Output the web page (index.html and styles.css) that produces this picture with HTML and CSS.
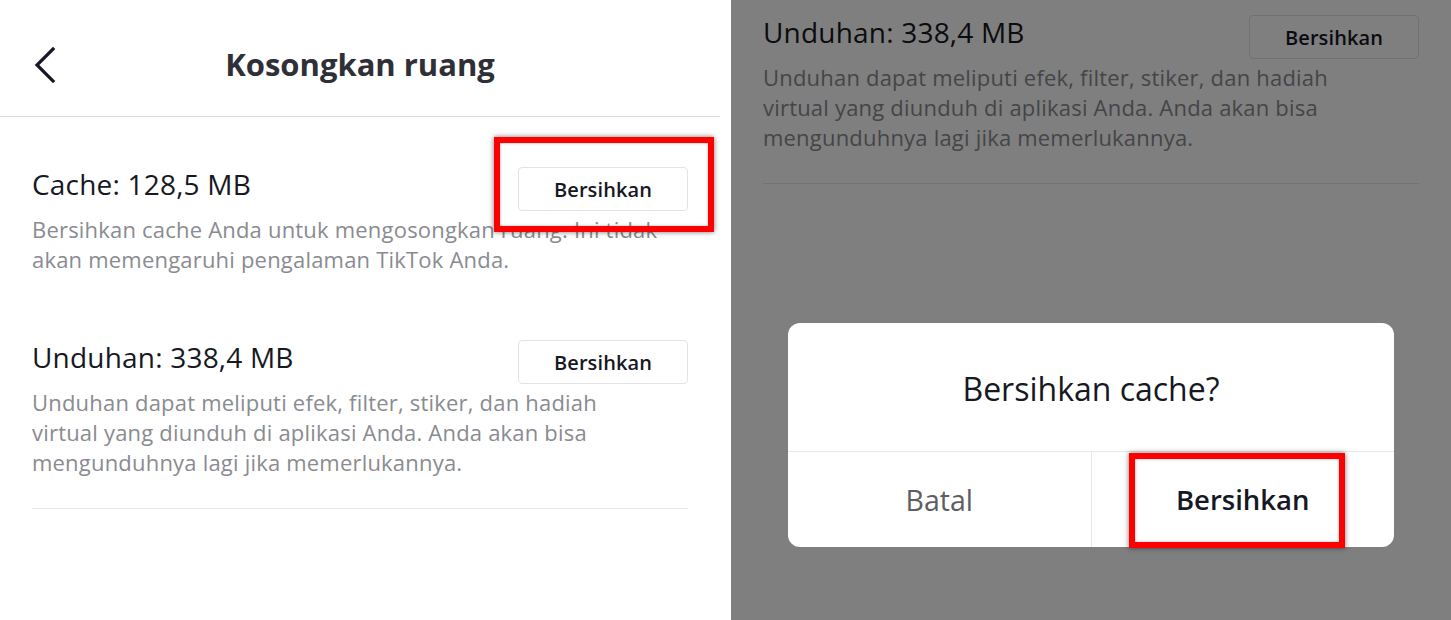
FILE: index.html
```html
<!DOCTYPE html>
<html lang="id">
<head>
<meta charset="utf-8">
<title>Kosongkan ruang</title>
<link rel="stylesheet" href="styles.css">
</head>
<body>
<div class="screen">
  <div class="panel panel-left">
    <header class="topbar">
      <svg class="back" width="24" height="36" viewBox="0 0 24 36" aria-hidden="true"><path d="M19 2 L3 18 L19 34" fill="none" stroke="#161823" stroke-width="3.2" stroke-linecap="square" stroke-linejoin="miter"/></svg>
      <h1 class="title">Kosongkan ruang</h1>
    </header>
    <section class="item item-first">
      <div class="item-row">
        <div class="item-name">Cache: 128,5 MB</div>
        <div class="btn-wrap">
          <button class="btn">Bersihkan</button>
          <span class="mark mark-btn"></span>
        </div>
      </div>
      <p class="item-desc">Bersihkan cache Anda untuk mengosongkan ruang. Ini tidak<br>akan memengaruhi pengalaman TikTok Anda.</p>
    </section>
    <section class="item item-second">
      <div class="item-row">
        <div class="item-name">Unduhan: 338,4 MB</div>
        <div class="btn-wrap"><button class="btn">Bersihkan</button></div>
      </div>
      <p class="item-desc">Unduhan dapat meliputi efek, filter, stiker, dan hadiah<br>virtual yang diunduh di aplikasi Anda. Anda akan bisa<br>mengunduhnya lagi jika memerlukannya.</p>
    </section>
  </div>
  <div class="panel panel-right">
    <section class="item item-scrolled">
      <div class="item-row">
        <div class="item-name">Unduhan: 338,4 MB</div>
        <div class="btn-wrap"><button class="btn">Bersihkan</button></div>
      </div>
      <p class="item-desc">Unduhan dapat meliputi efek, filter, stiker, dan hadiah<br>virtual yang diunduh di aplikasi Anda. Anda akan bisa<br>mengunduhnya lagi jika memerlukannya.</p>
    </section>
    <div class="overlay">
      <div class="dialog">
        <div class="dialog-title">Bersihkan cache?</div>
        <div class="dialog-actions">
          <div class="action action-cancel">Batal</div>
          <div class="action action-confirm">Bersihkan<span class="mark mark-confirm"></span></div>
        </div>
      </div>
    </div>
  </div>
</div>
</body>
</html>
```
FILE: styles.css
```css
* { box-sizing: border-box; }
html, body { margin: 0; padding: 0; }
body {
  width: 1451px;
  height: 620px;
  overflow: hidden;
  background: #ffffff;
  font-family: "Open Sans", "Liberation Sans", sans-serif;
  color: #161823;
}
.screen {
  display: flex;
  width: 1451px;
  height: 620px;
}
.panel {
  height: 620px;
  background: #ffffff;
  position: relative;
  overflow: hidden;
}
.panel-left { width: 731px; padding-right: 11px; }
.panel-right { width: 720px; }

.topbar {
  height: 117px;
  border-bottom: 1px solid #dcdcde;
  display: flex;
  align-items: center;
  justify-content: center;
  position: relative;
  padding-top: 12px;
}
.back {
  position: absolute;
  left: 34px;
  top: 47px;
}
.title {
  margin: 0;
  font-size: 31px;
  line-height: 40px;
  font-weight: 700;
  letter-spacing: 0;
  color: #2f3037;
}

.item {
  margin: 0 32px;
}
.item-first { padding-top: 50px; }
.item-second { padding-top: 66px; padding-bottom: 31px; border-bottom: 1px solid #e6e6e8; }
.item-scrolled { padding-top: 15px; padding-bottom: 31px; border-bottom: 1px solid #e6e6e8; }

.item-row {
  display: flex;
  justify-content: space-between;
  align-items: flex-start;
}
.item-name {
  font-size: 28px;
  line-height: 34px;
  letter-spacing: 0.2px;
  color: #161823;
}
.btn-wrap { position: relative; }
.btn {
  display: block;
  width: 170px;
  height: 44px;
  border: 1.5px solid #e3e3e5;
  border-radius: 4px;
  background: #ffffff;
  font-family: inherit;
  font-size: 20px;
  font-weight: 600;
  letter-spacing: 0.1px;
  color: #161823;
  padding: 0;
}
.item-desc {
  margin: 3px 0 0;
  font-size: 22px;
  line-height: 30px;
  color: #8a8b91;
  white-space: nowrap;
  letter-spacing: 0.2px;
}

.mark {
  position: absolute;
  border: 6px solid #ff0000;
  box-shadow: 0 0 5px rgba(0, 0, 0, 0.55), inset 0 0 3px rgba(0, 0, 0, 0.3);
  pointer-events: none;
}
.mark-btn { left: -24px; right: -26px; top: -30px; bottom: -21px; }

.overlay {
  position: absolute;
  inset: 0;
  background: rgba(0, 0, 0, 0.5);
  display: flex;
  flex-direction: column;
  align-items: center;
  padding-top: 323px;
}
.dialog {
  width: 606px;
  background: #ffffff;
  border-radius: 12px;
}
.dialog-title {
  height: 129px;
  display: flex;
  align-items: center;
  justify-content: center;
  font-size: 32px;
  padding-top: 2px;
  color: #161823;
  border-bottom: 1px solid #e8e8ea;
}
.dialog-actions {
  display: flex;
  height: 95px;
}
.action {
  flex: 1;
  display: flex;
  align-items: center;
  justify-content: center;
  font-size: 28.5px;
  position: relative;
}
.action-cancel {
  color: #5d5e64;
  border-right: 1px solid #e8e8ea;
}
.action-confirm {
  font-size: 27.5px;
  font-weight: 600;
  color: #161823;
}
.mark-confirm { left: 37px; right: 49px; top: 1px; bottom: -1px; }
```
